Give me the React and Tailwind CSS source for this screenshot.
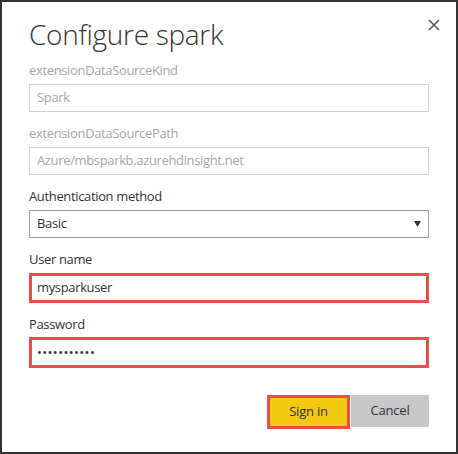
import React from 'react';

const font = { fontFamily: '"Open Sans", "Noto Sans", sans-serif' };

const Field = ({ label, muted, children }) => (
  <div className="flex flex-col">
    <label className={`h-[18px] leading-[18px] text-[13px] tracking-[-0.35px] mb-[5px] ${muted ? 'text-[#a6a6a6]' : 'text-[#333]'}`}>
      {label}
    </label>
    {children}
  </div>
);

const ConfigureSpark = () => {
  return (
    <div className="relative w-[458px] h-[454px] bg-white border-2 border-[#333] px-[27px] pt-[14px]" style={font}>
      <button className="absolute top-[17px] right-[16px] w-[12px] h-[12px] text-[#555]" aria-label="Close">
        <svg viewBox="0 0 12 12" width="12" height="12">
          <path d="M1 1 L11 11 M11 1 L1 11" stroke="currentColor" strokeWidth="1.6" />
        </svg>
      </button>

      <h1 className="text-[28px] leading-[36px] font-light text-[#333] tracking-[-0.3px]">Configure spark</h1>

      <div className="mt-[9px] flex flex-col gap-[12px]">
        <Field label="extensionDataSourceKind" muted>
          <div className="h-[28px] border border-[#d2d2d2] pl-[7px] flex items-center text-[13px] tracking-[-0.35px] text-[#a6a6a6]">Spark</div>
        </Field>
        <Field label="extensionDataSourcePath" muted>
          <div className="h-[28px] border border-[#d2d2d2] pl-[7px] flex items-center text-[13px] tracking-[-0.35px] text-[#a6a6a6]">Azure/mbsparkb.azurehdinsight.net</div>
        </Field>
        <Field label="Authentication method">
          <div className="h-[28px] border border-[#a0a0a0] pl-[7px] pr-[7px] flex items-center justify-between text-[13px] tracking-[-0.35px] text-[#333]">
            <span>Basic</span>
            <svg width="7" height="6" viewBox="0 0 7 6">
              <path d="M0 0 H7 L3.5 6 Z" fill="#333" />
            </svg>
          </div>
        </Field>
        <Field label="User name">
          <div className="h-[30px] border-[3px] border-[#eb4d47] pl-[5px] flex items-center text-[13px] tracking-[-0.35px] text-[#333]">mysparkuser</div>
        </Field>
        <Field label="Password">
          <div className="h-[31px] -mt-[1px] border-[3px] border-[#eb4d47] pl-[5px] flex items-center text-[13px] tracking-[0.4px] text-[#333]">•••••••••••</div>
        </Field>
      </div>

      <div className="mt-[27px] flex justify-end items-start gap-[1px]">
        <button className="w-[83px] h-[34px] bg-[#f2c811] border-[3px] border-[#eb4d47] text-[13px] tracking-[-0.2px] text-[#333]">Sign in</button>
        <button className="w-[78px] h-[32px] bg-[#c8c8c8] text-[13px] tracking-[-0.2px] text-[#333]">Cancel</button>
      </div>
    </div>
  );
};

export default function App() {
  return <ConfigureSpark />;
}
